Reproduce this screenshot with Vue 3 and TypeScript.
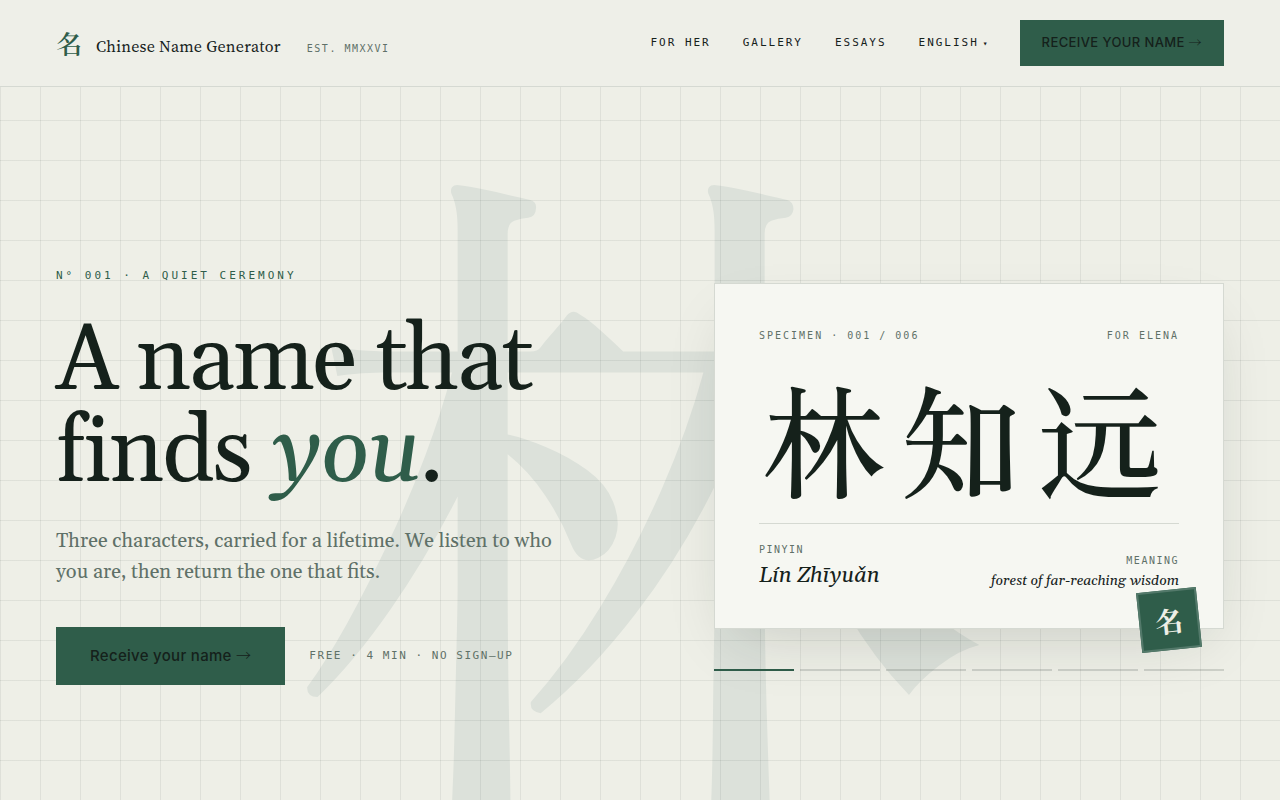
<script setup lang="ts">
import { ref } from 'vue'

interface Link {
  label: string
  href: string
}

const links: Link[] = [
  { label: 'For her', href: '#for-her' },
  { label: 'Gallery', href: '#gallery' },
  { label: 'Essays', href: '#essays' },
]

const slides = 6
const current = ref(0)
</script>

<template>
  <div class="page">
    <header class="bar">
      <a class="brand" href="#home">
        <span class="mark" lang="zh-Hans">名</span>
        <span class="brand-name">Chinese Name Generator</span>
        <span class="est">Est. MMXXVI</span>
      </a>
      <nav class="nav" aria-label="Main">
        <a v-for="link in links" :key="link.href" class="nav-link" :href="link.href">{{ link.label }}</a>
        <button class="nav-link" type="button">English<span class="caret">▾</span></button>
        <a class="cta cta-small" href="#begin">Receive your name <span class="arrow">→</span></a>
      </nav>
    </header>

    <main class="hero">
      <div class="watermark" lang="zh-Hans" aria-hidden="true">林</div>
      <section class="intro">
        <p class="eyebrow">N° 001 · A quiet ceremony</p>
        <h1 class="title">A name that finds <em>you</em>.</h1>
        <p class="lede">Three characters, carried for a lifetime. We listen to who you are, then return the one that fits.</p>
        <div class="actions">
          <a class="cta cta-large" href="#begin">Receive your name <span class="arrow">→</span></a>
          <span class="note">Free · 4 min · No sign–up</span>
        </div>
      </section>

      <section class="showcase">
        <article class="card">
          <div class="card-top">
            <span>Specimen · 001 / 006</span>
            <span>For Elena</span>
          </div>
          <div class="characters" lang="zh-Hans">林知远</div>
          <div class="card-bottom">
            <div>
              <div class="label">Pinyin</div>
              <div class="pinyin">Lín Zhīyuǎn</div>
            </div>
            <div class="meaning-block">
              <div class="label">Meaning</div>
              <div class="meaning">forest of far-reaching wisdom</div>
            </div>
          </div>
          <div class="seal" lang="zh-Hans">名</div>
        </article>
        <div class="pager">
          <button
            v-for="n in slides"
            :key="n"
            type="button"
            class="tick"
            :class="{ active: current === n - 1 }"
            :aria-label="`Specimen ${n}`"
            @click="current = n - 1"
          ></button>
        </div>
      </section>
    </main>
  </div>
</template>

<style>
body {
  background: #eeefe7;
}
</style>

<style scoped>
.page {
  --ink: #15211b;
  --muted: #5f7168;
  --green: #2f5d4a;
  --rule: #d5d9d2;
  --serif: Gelasio, Georgia, "Liberation Serif", serif;
  --cjk: "Noto Serif SC", "Noto Serif CJK SC", "Noto Sans CJK SC", serif;
  --mono: "DejaVu Sans Mono", monospace;
  --sans: Inter, sans-serif;
  position: relative;
  display: flex;
  flex-direction: column;
  min-height: 100vh;
  overflow: hidden;
  color: var(--ink);
  background: #eeefe7;
}

.page::before {
  content: "";
  position: absolute;
  inset: 0;
  z-index: 1;
  pointer-events: none;
  background-image:
    linear-gradient(to right, rgba(21, 33, 27, 0.07) 1px, transparent 1px),
    linear-gradient(to bottom, rgba(21, 33, 27, 0.07) 1px, transparent 1px);
  background-size: 40px 40px;
}

.bar {
  position: relative;
  z-index: 3;
  display: flex;
  align-items: center;
  justify-content: space-between;
  padding: 20px 56px;
  border-bottom: 1px solid var(--rule);
  background: #eeefe8;
}

.brand {
  display: flex;
  align-items: flex-end;
  color: inherit;
  text-decoration: none;
}

.mark {
  margin-right: 14px;
  font: 600 26px/38px var(--cjk);
  color: var(--green);
}

.brand-name {
  margin-right: 26px;
  font: 400 16px/32px "Source Serif 4", "Source Serif Pro", "Noto Serif", var(--serif);
  letter-spacing: 0.015em;
}

.est,
.label,
.card-top {
  font: 400 10px/16px var(--mono);
  letter-spacing: 0.15em;
  text-transform: uppercase;
  color: var(--muted);
}

.est {
  line-height: 26px;
}

.nav {
  display: flex;
  align-items: center;
  gap: 32px;
}

.nav-link {
  padding: 0;
  border: 0;
  background: none;
  font: 400 11px/16px var(--mono);
  letter-spacing: 0.18em;
  text-transform: uppercase;
  text-decoration: none;
  color: var(--ink);
}

.caret {
  margin-left: 4px;
  font-size: 8px;
  letter-spacing: 0;
}

.cta {
  background: var(--green);
  color: var(--ink);
  font-family: var(--sans);
  font-weight: 500;
  letter-spacing: 0.02em;
  text-decoration: none;
}

.arrow {
  font-family: "Noto Serif SC", "Noto Serif CJK SC", "Noto Sans CJK SC", serif;
  font-weight: 500;
  line-height: 1;
}

.cta-small {
  padding: 12px 22px 14px;
  font-size: 13px;
  line-height: 20px;
  letter-spacing: 0.03em;
  text-transform: uppercase;
}

.cta-large {
  padding: 17px 34px;
  font-size: 15px;
  line-height: 24px;
}

.hero {
  position: relative;
  flex: 1;
  display: grid;
  grid-template-columns: minmax(0, 578fr) minmax(0, 510fr);
  gap: 80px;
  align-items: center;
  padding: 106px 56px 40px;
}

.watermark {
  position: absolute;
  inset: 40px 0 0;
  display: flex;
  align-items: center;
  justify-content: center;
  font: 500 704px/1 "Zen Old Mincho", var(--cjk);
  color: #dce1da;
}

.intro,
.showcase {
  position: relative;
  z-index: 2;
}

.eyebrow {
  margin: 0 0 32px;
  font: 400 11px/16px var(--mono);
  letter-spacing: 3px;
  text-transform: uppercase;
  color: var(--green);
}

.title {
  margin: 0 0 26px;
  max-width: 560px;
  font: 400 92px/92px var(--serif);
  letter-spacing: -0.02em;
}

.title em {
  color: var(--green);
}

.lede {
  margin: 0 0 39px;
  max-width: 520px;
  font: 400 20px/31px var(--serif);
  color: var(--muted);
}

.actions {
  display: flex;
  align-items: center;
  gap: 24px;
}

.note {
  font: 400 11px/16px var(--mono);
  letter-spacing: 0.14em;
  text-transform: uppercase;
  color: var(--muted);
}

.card {
  position: relative;
  padding: 44px 44px 34px;
  border: 1px solid var(--rule);
  background: #f6f7f2;
  box-shadow: 0 24px 60px -20px rgba(21, 33, 27, 0.18);
}

.card-top {
  display: flex;
  justify-content: space-between;
  letter-spacing: 0.2em;
}

.characters {
  padding: 26px 0 21px;
  font: 500 124px/132px "Zen Old Mincho", var(--cjk);
  letter-spacing: 14px;
  text-align: center;
  white-space: nowrap;
}

.card-bottom {
  display: flex;
  align-items: flex-end;
  justify-content: space-between;
  padding-top: 18px;
  border-top: 1px solid var(--rule);
}

.pinyin {
  font: italic 400 22px/36px var(--serif);
}

.meaning-block {
  text-align: right;
}

.meaning {
  font: italic 400 14px/25px var(--serif);
}

.seal {
  position: absolute;
  right: 24px;
  bottom: -22px;
  display: grid;
  place-items: center;
  box-sizing: border-box;
  width: 60px;
  height: 60px;
  border: 2px solid #53796a;
  background: var(--green);
  color: #eeefe7;
  font: 700 28px/1 var(--cjk);
  transform: rotate(-6deg);
}

.pager {
  display: grid;
  grid-template-columns: repeat(6, minmax(0, 1fr));
  gap: 6px;
  margin-top: 40px;
}

.tick {
  height: 2px;
  padding: 0;
  border: 0;
  background: rgba(21, 33, 27, 0.15);
}

.tick.active {
  background: var(--green);
}
</style>
